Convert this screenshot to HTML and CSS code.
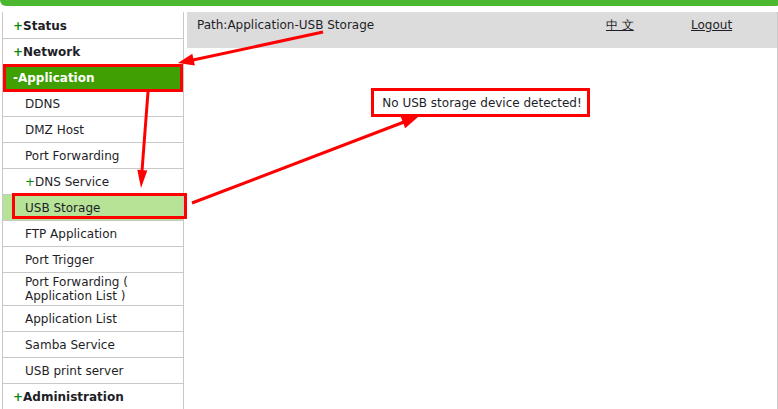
FILE: index.html
```html
<!DOCTYPE html>
<html lang="en">
<head>
    <meta charset="UTF-8" />
    <title>Application - USB Storage</title>
    <link rel="stylesheet" href="styles.css">
</head>
<body>

<div class="topbar"></div>

<div class="layout">

    <nav class="menu">
        <div class="item top"><span class="plus">+</span>Status</div>
        <div class="item top"><span class="plus">+</span>Network</div>
        <div class="item top open">-Application</div>
        <div class="item sub">DDNS</div>
        <div class="item sub">DMZ Host</div>
        <div class="item sub">Port Forwarding</div>
        <div class="item sub"><span class="plus thin">+</span>DNS Service</div>
        <div class="item sub active">USB Storage</div>
        <div class="item sub">FTP Application</div>
        <div class="item sub">Port Trigger</div>
        <div class="item sub">Port Forwarding (<br>Application List )</div>
        <div class="item sub">Application List</div>
        <div class="item sub">Samba Service</div>
        <div class="item sub">USB print server</div>
        <div class="item top"><span class="plus">+</span>Administration</div>
    </nav>

    <main class="content">
        <div class="pathbar">
            <span class="path">Path:Application-USB Storage</span>
            <a class="lang" href="#">中 文</a>
            <a class="logout" href="#">Logout</a>
        </div>
        <p class="notice">No USB storage device detected!</p>
    </main>

</div>

<!-- annotation marks drawn over the page -->
<svg class="marks" width="778" height="409" viewBox="0 0 778 409">
    <g fill="none" stroke="#f00" stroke-width="3">
        <rect x="4.5" y="65.5" width="177" height="25" />
        <rect x="13.5" y="194.5" width="172" height="23" />
        <rect x="372.5" y="89.5" width="216" height="26" />
        <line x1="323" y1="32" x2="193" y2="60" />
        <line x1="148" y1="92" x2="142" y2="171" />
        <line x1="192" y1="203" x2="404" y2="122" />
    </g>
    <g fill="#f00">
        <polygon points="178,63 192.3,53.8 194.9,65.6" />
        <polygon points="141,188 137.3,169.7 147.3,170.5" />
        <polygon points="418,117 405.2,128.3 400.9,117.1" />
    </g>
</svg>

</body>
</html>
```

FILE: styles.css
```css
body {
    margin: 0;
    font-family: "DejaVu Sans", Verdana, sans-serif;
    font-size: 12px;
    color: #1e1e28;
    background: #fff;
    overflow: hidden;
}

.topbar {
    height: 6px;
    background: #4cb82f;
    border-radius: 0 0 6px 30px;
    margin-bottom: 6px;
}

.layout {
    display: flex;
    align-items: stretch;
    height: 397px;
    padding-left: 2px;
}

/* Left menu */
.menu {
    width: 180px;
    border-left: 1px solid #c8c8c8;
    border-right: 1px solid #c8c8c8;
    padding-top: 1px;
}

.item {
    display: flex;
    align-items: center;
    min-height: 26px;
    border-bottom: 1px solid #c8c8c8;
    line-height: 14px;
    box-sizing: border-box;
}

.item.top {
    padding-left: 10px;
    font-weight: bold;
}

.item.sub {
    padding: 2px 0 2px 22px;
}

.item.open {
    background: #409f02;
    color: #fff;
}

.item.active {
    background: #b6e396;
}

.plus {
    color: #0a8a10;
    font-weight: bold;
}

.plus.thin {
    font-weight: normal;
}

/* Right content */
.content {
    flex: 1;
    margin-left: 3px;
    border-right: 1px solid #c8c8c8;
}

.pathbar {
    display: flex;
    height: 36px;
    background: #dcdcdc;
    padding: 6px 0 0 10px;
    box-sizing: border-box;
    line-height: 15px;
}

.path {
    flex: 1;
}

.pathbar a {
    color: #1e1e28;
}

.lang {
    width: 85px;
}

.logout {
    width: 86px;
}

.notice {
    margin: 48px 0 0;
    text-align: center;
    line-height: 15px;
}

.marks {
    position: absolute;
    top: 0;
    left: 0;
    pointer-events: none;
}
```
